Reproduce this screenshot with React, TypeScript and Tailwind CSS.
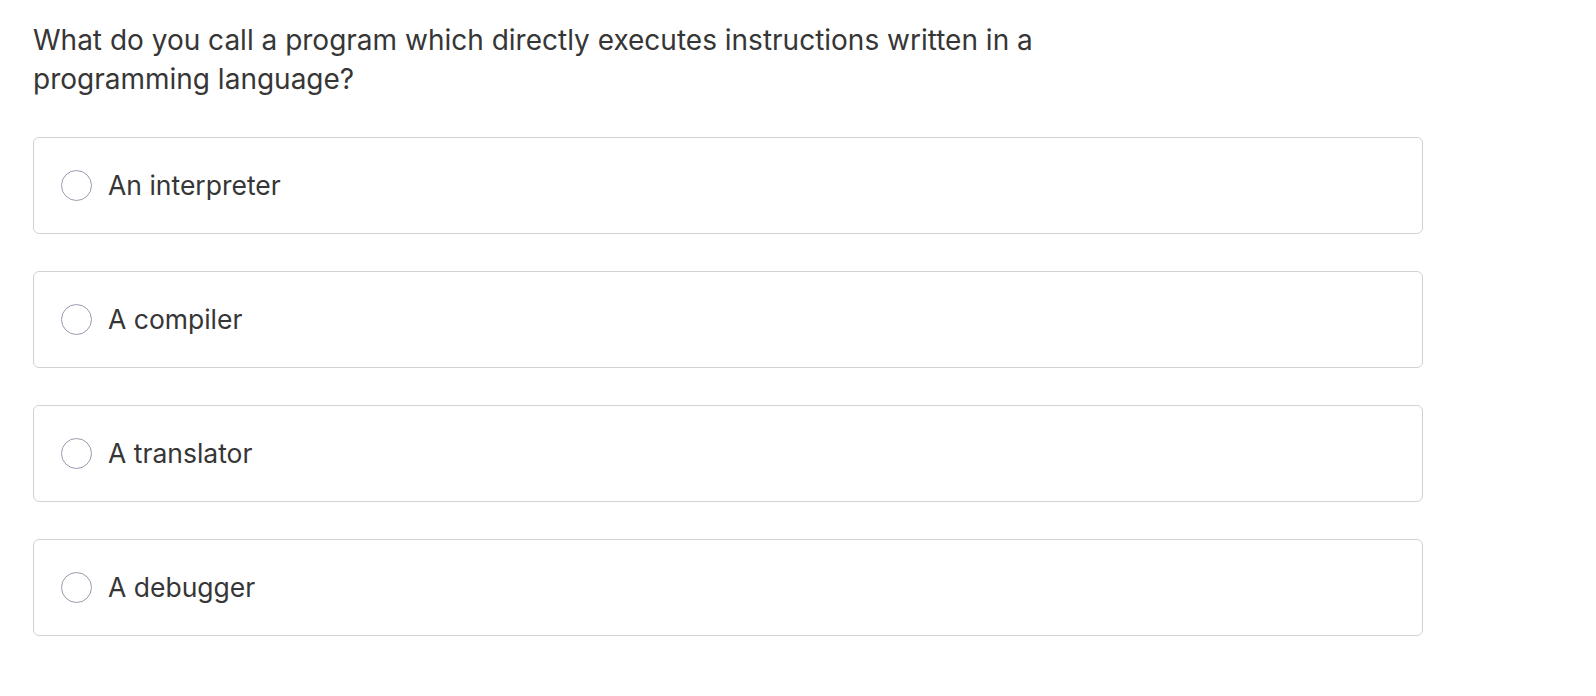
const options = ["An interpreter", "A compiler", "A translator", "A debugger"];

export default function App() {
  return (
    <div className="min-h-screen bg-white pl-[33px] pt-[21px] text-[#363636]" style={{ fontFamily: "Inter, 'Noto Sans', sans-serif" }}>
      <p className="mb-[38px] max-w-[1080px] text-[28px] leading-[39px]">
        What do you call a program which directly executes instructions written in a programming language?
      </p>
      <div className="flex w-[1390px] flex-col gap-[37px]">
        {options.map((opt) => (
          <label
            key={opt}
            className="flex h-[97px] cursor-pointer items-center gap-[16px] rounded-[6px] border border-[#d2d2d2] pl-[27px]"
          >
            <span className="h-[31px] w-[31px] shrink-0 rounded-full border border-[#969cae] bg-white" />
            <span className="text-[26.5px]">{opt}</span>
          </label>
        ))}
      </div>
    </div>
  );
}
